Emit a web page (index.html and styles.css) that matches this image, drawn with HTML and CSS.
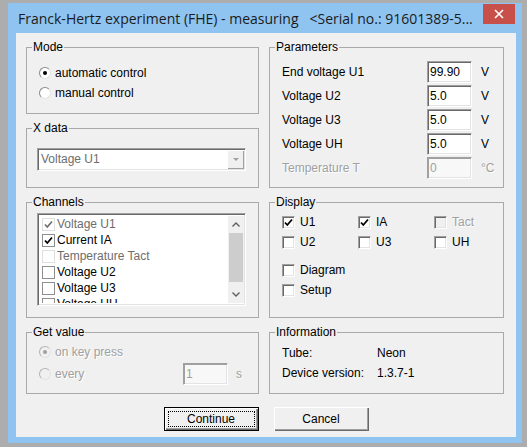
FILE: index.html
```html
<!DOCTYPE html>
<html lang="en">
<head>
    <meta charset="UTF-8">
    <title>Franck-Hertz experiment (FHE) - measuring</title>
    <link rel="stylesheet" href="styles.css">
</head>
<body>
    <div class="window">
        <div class="titlebar">
            <span class="title">Franck-Hertz experiment (FHE) - measuring   &lt;Serial no.: 91601389-5...</span>
            <span class="close">
                <svg width="10" height="10" viewBox="0 0 10 10"><path d="M1 1L9 9M9 1L1 9" stroke="#fff" stroke-width="1.6"/></svg>
            </span>
        </div>

        <div class="client">
            <div class="groups">
                <div class="stack">
                    <fieldset class="grp mode">
                        <legend>Mode</legend>
                        <div class="body">
                            <div class="opt"><span class="radio on"></span>automatic control</div>
                            <div class="opt"><span class="radio"></span>manual control</div>
                        </div>
                    </fieldset>
                    <fieldset class="grp xdata">
                        <legend>X data</legend>
                        <div class="body">
                            <div class="combo">
                                <span class="combo-text">Voltage U1</span>
                                <span class="combo-btn"><span class="tri"></span></span>
                            </div>
                        </div>
                    </fieldset>
                </div>

                <fieldset class="grp params">
                    <legend>Parameters</legend>
                    <div class="body param-grid">
                        <span>End voltage U1</span><span class="edit">99.90</span><span class="unit">V</span>
                        <span>Voltage U2</span><span class="edit">5.0</span><span class="unit">V</span>
                        <span>Voltage U3</span><span class="edit">5.0</span><span class="unit">V</span>
                        <span>Voltage UH</span><span class="edit">5.0</span><span class="unit">V</span>
                        <span class="dis">Temperature T</span><span class="edit off">0</span><span class="unit dis">°C</span>
                    </div>
                </fieldset>

                <fieldset class="grp channels">
                    <legend>Channels</legend>
                    <div class="body">
                        <div class="listbox">
                            <div class="items">
                                <div class="item grey"><span class="fcheck on off"></span>Voltage U1</div>
                                <div class="item"><span class="fcheck on"></span>Current IA</div>
                                <div class="item grey"><span class="fcheck off"></span>Temperature Tact</div>
                                <div class="item"><span class="fcheck"></span>Voltage U2</div>
                                <div class="item"><span class="fcheck"></span>Voltage U3</div>
                                <div class="item"><span class="fcheck"></span>Voltage UH</div>
                            </div>
                            <div class="scrollbar">
                                <span class="arrow"><svg width="8" height="5" viewBox="0 0 8 5"><path d="M0.5 4.5L4 1L7.5 4.5" fill="none" stroke="#606060" stroke-width="1.4"/></svg></span>
                                <span class="thumb"></span>
                                <span class="track"></span>
                                <span class="arrow"><svg width="8" height="5" viewBox="0 0 8 5"><path d="M0.5 0.5L4 4L7.5 0.5" fill="none" stroke="#606060" stroke-width="1.4"/></svg></span>
                            </div>
                        </div>
                    </div>
                </fieldset>

                <fieldset class="grp display">
                    <legend>Display</legend>
                    <div class="body">
                        <div class="check-grid">
                            <div class="opt"><span class="check on"></span>U1</div>
                            <div class="opt"><span class="check on"></span>IA</div>
                            <div class="opt dis"><span class="check off"></span>Tact</div>
                            <div class="opt"><span class="check"></span>U2</div>
                            <div class="opt"><span class="check"></span>U3</div>
                            <div class="opt"><span class="check"></span>UH</div>
                        </div>
                        <div class="check-list">
                            <div class="opt"><span class="check"></span>Diagram</div>
                            <div class="opt"><span class="check"></span>Setup</div>
                        </div>
                    </div>
                </fieldset>

                <fieldset class="grp getvalue">
                    <legend>Get value</legend>
                    <div class="body">
                        <div class="opt dis"><span class="radio on off"></span>on key press</div>
                        <div class="every-row">
                            <div class="opt dis"><span class="radio off"></span>every</div>
                            <span class="edit off">1</span>
                            <span class="unit dis">s</span>
                        </div>
                    </div>
                </fieldset>

                <fieldset class="grp info">
                    <legend>Information</legend>
                    <div class="body info-grid">
                        <span>Tube:</span><span>Neon</span>
                        <span>Device version:</span><span>1.3.7-1</span>
                    </div>
                </fieldset>
            </div>

            <div class="buttons">
                <button type="button" class="btn default">Continue</button>
                <button type="button" class="btn">Cancel</button>
            </div>
        </div>
    </div>
</body>
</html>
```

FILE: styles.css
```css
html, body {
    margin: 0;
    height: 447px;
    overflow: hidden;
}
body {
    background: #adadad;
    font-family: 'Liberation Sans', Arial, sans-serif;
    font-size: 12px;
    color: #000;
}
.window {
    margin: 3px 0 0 8px;
    width: 514px;
    height: 440px;
    background: #8fc4f1;
}
.titlebar {
    height: 30px;
    display: flex;
    align-items: flex-start;
}
.title {
    font-family: 'Open Sans', 'Noto Sans', sans-serif;
    font-size: 14px;
    line-height: 20px;
    padding: 6px 0 0 10px;
    white-space: pre;
    color: #1b1b1b;
}
.close {
    margin: 1px 7px 0 auto;
    width: 32px;
    height: 20px;
    background: #c7504b;
    display: flex;
    align-items: center;
    justify-content: center;
}
.client {
    margin-left: 8px;
    width: 500px;
    height: 404px;
    box-sizing: border-box;
    padding: 7px 0 0 10px;
    background: #f0f0f0;
}
.groups {
    display: grid;
    grid-template-columns: 233px 235px;
    grid-template-rows: 148px 123px 69px;
    column-gap: 10px;
    row-gap: 7px;
}
.stack {
    display: flex;
    flex-direction: column;
    gap: 7px;
}

/* group boxes */
.grp {
    margin: 0;
    padding: 0;
    border: 1px solid #a9a9a9;
    box-sizing: border-box;
    min-width: 0;
}
.grp legend {
    margin-left: 5px;
    padding: 0 1px;
    line-height: 14px;
}
.mode { height: 74px; }
.xdata { height: 67px; }
.mode .body { padding: 9px 0 0 12px; }
.xdata .body { padding: 13px 0 0 10px; }
.params .body { padding: 7px 0 0 12px; }
.channels .body { padding: 4px 0 0 10px; }
.display .body { padding: 3px 0 0 12px; }
.getvalue .body { padding: 3px 0 0 12px; }
.info .body { padding: 4px 0 0 12px; }

.opt {
    display: flex;
    align-items: center;
    height: 20px;
    gap: 5px;
}
.dis {
    color: #a0a0a0;
    text-shadow: 1px 1px 0 #fff;
}

/* radio buttons */
.radio {
    width: 12px;
    height: 12px;
    box-sizing: border-box;
    border-radius: 50%;
    border: 1px solid;
    border-color: #8a8a8a #e3e3e3 #e3e3e3 #8a8a8a;
    background: #fff;
    display: flex;
    align-items: center;
    justify-content: center;
    margin-right: -1px;
}
.radio.on::after {
    content: "";
    width: 4px;
    height: 4px;
    border-radius: 50%;
    background: #000;
}
.radio.off {
    background: #f0f0f0;
    border-color: #b4b4b4 #e3e3e3 #e3e3e3 #b4b4b4;
}
.radio.on.off::after { background: #a0a0a0; }

/* checkboxes, classic */
.check {
    width: 13px;
    height: 13px;
    box-sizing: border-box;
    border: 1px solid;
    border-color: #a0a0a0 #fff #fff #a0a0a0;
    box-shadow: inset 1px 1px 0 #696969, inset -1px -1px 0 #e3e3e3;
    background: #fff no-repeat center;
}
.check.off { background-color: #f0f0f0; }
.check.on,
.fcheck.on {
    background-image: url("data:image/svg+xml,%3Csvg xmlns='http://www.w3.org/2000/svg' width='9' height='9' viewBox='0 0 9 9'%3E%3Cpath d='M1 4.5L3.3 7L8 1.5' fill='none' stroke='%23000' stroke-width='1.8'/%3E%3C/svg%3E");
}
.check-grid {
    display: grid;
    grid-template-columns: 76px 76px 76px;
}
.check-list { margin-top: 8px; }

/* combo */
.combo {
    width: 209px;
    height: 23px;
    box-sizing: border-box;
    border: 1px solid;
    border-color: #a0a0a0 #fff #fff #a0a0a0;
    box-shadow: inset 1px 1px 0 #696969, inset -1px -1px 0 #e3e3e3;
    background: #fff;
    display: flex;
    align-items: stretch;
    padding: 1px;
}
.combo-text {
    flex: 1;
    padding-left: 2px;
    color: #6d6d6d;
    line-height: 19px;
}
.combo-btn {
    width: 17px;
    background: #f0f0f0;
    box-shadow: inset 1px 1px 0 #fff, inset -1px -1px 0 #a0a0a0;
    display: flex;
    align-items: center;
    justify-content: center;
}
.tri {
    border-left: 3px solid transparent;
    border-right: 3px solid transparent;
    border-top: 3px solid #a0a0a0;
}

/* edit boxes */
.edit {
    width: 45px;
    height: 22px;
    box-sizing: border-box;
    border: 1px solid;
    border-color: #a0a0a0 #fff #fff #a0a0a0;
    box-shadow: inset 1px 1px 0 #696969, inset -1px -1px 0 #e3e3e3;
    background: #fff;
    padding-left: 2px;
    line-height: 20px;
}
.edit.off {
    background: #f8f8f8;
    color: #a0a0a0;
    box-shadow: inset 1px 1px 0 #a0a0a0, inset -1px -1px 0 #e3e3e3;
}
.param-grid {
    display: grid;
    grid-template-columns: 145px 45px auto;
    grid-auto-rows: 22px;
    row-gap: 2px;
    align-items: center;
}
.param-grid .unit { margin-left: 9px; }

/* listbox */
.listbox {
    width: 209px;
    height: 93px;
    box-sizing: border-box;
    border: 1px solid;
    border-color: #a0a0a0 #fff #fff #a0a0a0;
    box-shadow: inset 1px 1px 0 #696969, inset -1px -1px 0 #e3e3e3;
    background: #fff;
    padding: 2px 1px 2px 2px;
    display: flex;
}
.items {
    flex: 1;
    overflow: hidden;
    padding-left: 2px;
}
.item {
    display: flex;
    align-items: center;
    height: 16px;
    gap: 2px;
}
.item.grey { color: #6d6d6d; }
.fcheck {
    width: 13px;
    height: 13px;
    box-sizing: border-box;
    border: 1px solid #8f8f8f;
    background: #fff no-repeat center;
}
.fcheck.off {
    border-color: #c6c6c6;
    opacity: 0.55;
}
.scrollbar {
    width: 16px;
    background: #f0f0f0;
    display: flex;
    flex-direction: column;
}
.arrow {
    height: 17px;
    display: flex;
    align-items: center;
    justify-content: center;
}
.thumb {
    height: 49px;
    margin: 0 1px;
    background: #cdcdcd;
}
.track { flex: 1; }

/* get value */
.every-row {
    display: flex;
    align-items: center;
    height: 22px;
    margin-top: 1px;
}
.every-row .opt { width: 144px; }
.every-row .unit { margin-left: 8px; }

/* information */
.info-grid {
    display: grid;
    grid-template-columns: 95px auto;
    grid-auto-rows: 20px;
    align-items: center;
}

/* buttons */
.buttons {
    display: flex;
    justify-content: center;
    gap: 15px;
    margin: 13px 0 0 -10px;
}
.btn {
    width: 95px;
    height: 24px;
    font-family: inherit;
    font-size: 12px;
    color: #000;
    background: #f0f0f0;
    border: none;
    padding: 0;
    box-shadow: inset 1px 1px 0 #fff, inset -1px -1px 0 #696969, inset -2px -2px 0 #a0a0a0;
}
.btn.default {
    border: 1px solid #000;
    outline: 1px dotted #000;
    outline-offset: -5px;
}
```
